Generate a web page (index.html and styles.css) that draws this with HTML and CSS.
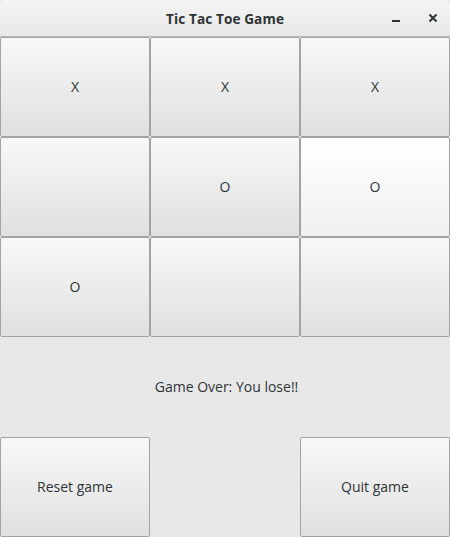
FILE: index.html
```html
<!DOCTYPE html>
<html>
<head>
<meta charset="utf-8">
<link rel="stylesheet" href="styles.css">
</head>
<body>
<div class="window">
  <div class="titlebar">
    <span class="title">Tic Tac Toe Game</span>
    <div class="controls">
      <svg class="ctl" width="12" height="12" viewBox="0 0 12 12"><rect x="2" y="8" width="8" height="2" fill="#2e3436"/></svg>
      <svg class="ctl" width="12" height="12" viewBox="0 0 12 12"><path d="M2.5 2.5 L9.5 9.5 M9.5 2.5 L2.5 9.5" stroke="#2e3436" stroke-width="2"/></svg>
    </div>
  </div>
  <div class="board">
    <button class="btn">X</button>
    <button class="btn">X</button>
    <button class="btn">X</button>
    <button class="btn"></button>
    <button class="btn">O</button>
    <button class="btn hover">O</button>
    <button class="btn">O</button>
    <button class="btn"></button>
    <button class="btn"></button>
  </div>
  <div class="status">Game Over: You lose!!</div>
  <div class="actions">
    <button class="btn">Reset game</button>
    <div></div>
    <button class="btn">Quit game</button>
  </div>
</div>
</body>
</html>
```
FILE: styles.css
```css
html, body {
  margin: 0;
  padding: 0;
  background: #e8e8e8;
}
.window {
  width: 450px;
  height: 537px;
  display: flex;
  flex-direction: column;
  font-family: "Open Sans", "Noto Sans", sans-serif;
  color: #2e3436;
  background: #e8e8e8;
}
.titlebar {
  height: 36px;
  border-bottom: 1px solid #b6b6b3;
  border-radius: 5px 5px 0 0;
  background: linear-gradient(#f4f4f4, #e8e8e7);
  position: relative;
  display: flex;
  align-items: center;
  justify-content: center;
  box-sizing: content-box;
}
.title {
  font-weight: bold;
  font-size: 13.6px;
  letter-spacing: 0.1px;
}
.controls {
  position: absolute;
  right: 11px;
  top: 12px;
  display: flex;
  gap: 25px;
}
.ctl { display: block; }
.board {
  display: grid;
  grid-template-columns: repeat(3, 150px);
  grid-template-rows: repeat(3, 100px);
}
.btn {
  margin: 0;
  padding: 0 0 2px 0;
  border: 1px solid #a3a3a3;
  border-radius: 2px;
  background: linear-gradient(#f8f8f8, #e0e0e0);
  font-family: "Open Sans", "Noto Sans", sans-serif;
  font-size: 14px;
  color: #2e3436;
  width: 150px;
  height: 100px;
  box-sizing: border-box;
}
.btn.hover {
  background: linear-gradient(#ffffff, #f0f0f0);
}
.status {
  height: 100px;
  display: flex;
  align-items: center;
  justify-content: center;
  font-size: 14px;
  padding: 0 0 2px 3px;
  box-sizing: border-box;
}
.actions {
  display: grid;
  grid-template-columns: repeat(3, 150px);
  height: 100px;
}
```
